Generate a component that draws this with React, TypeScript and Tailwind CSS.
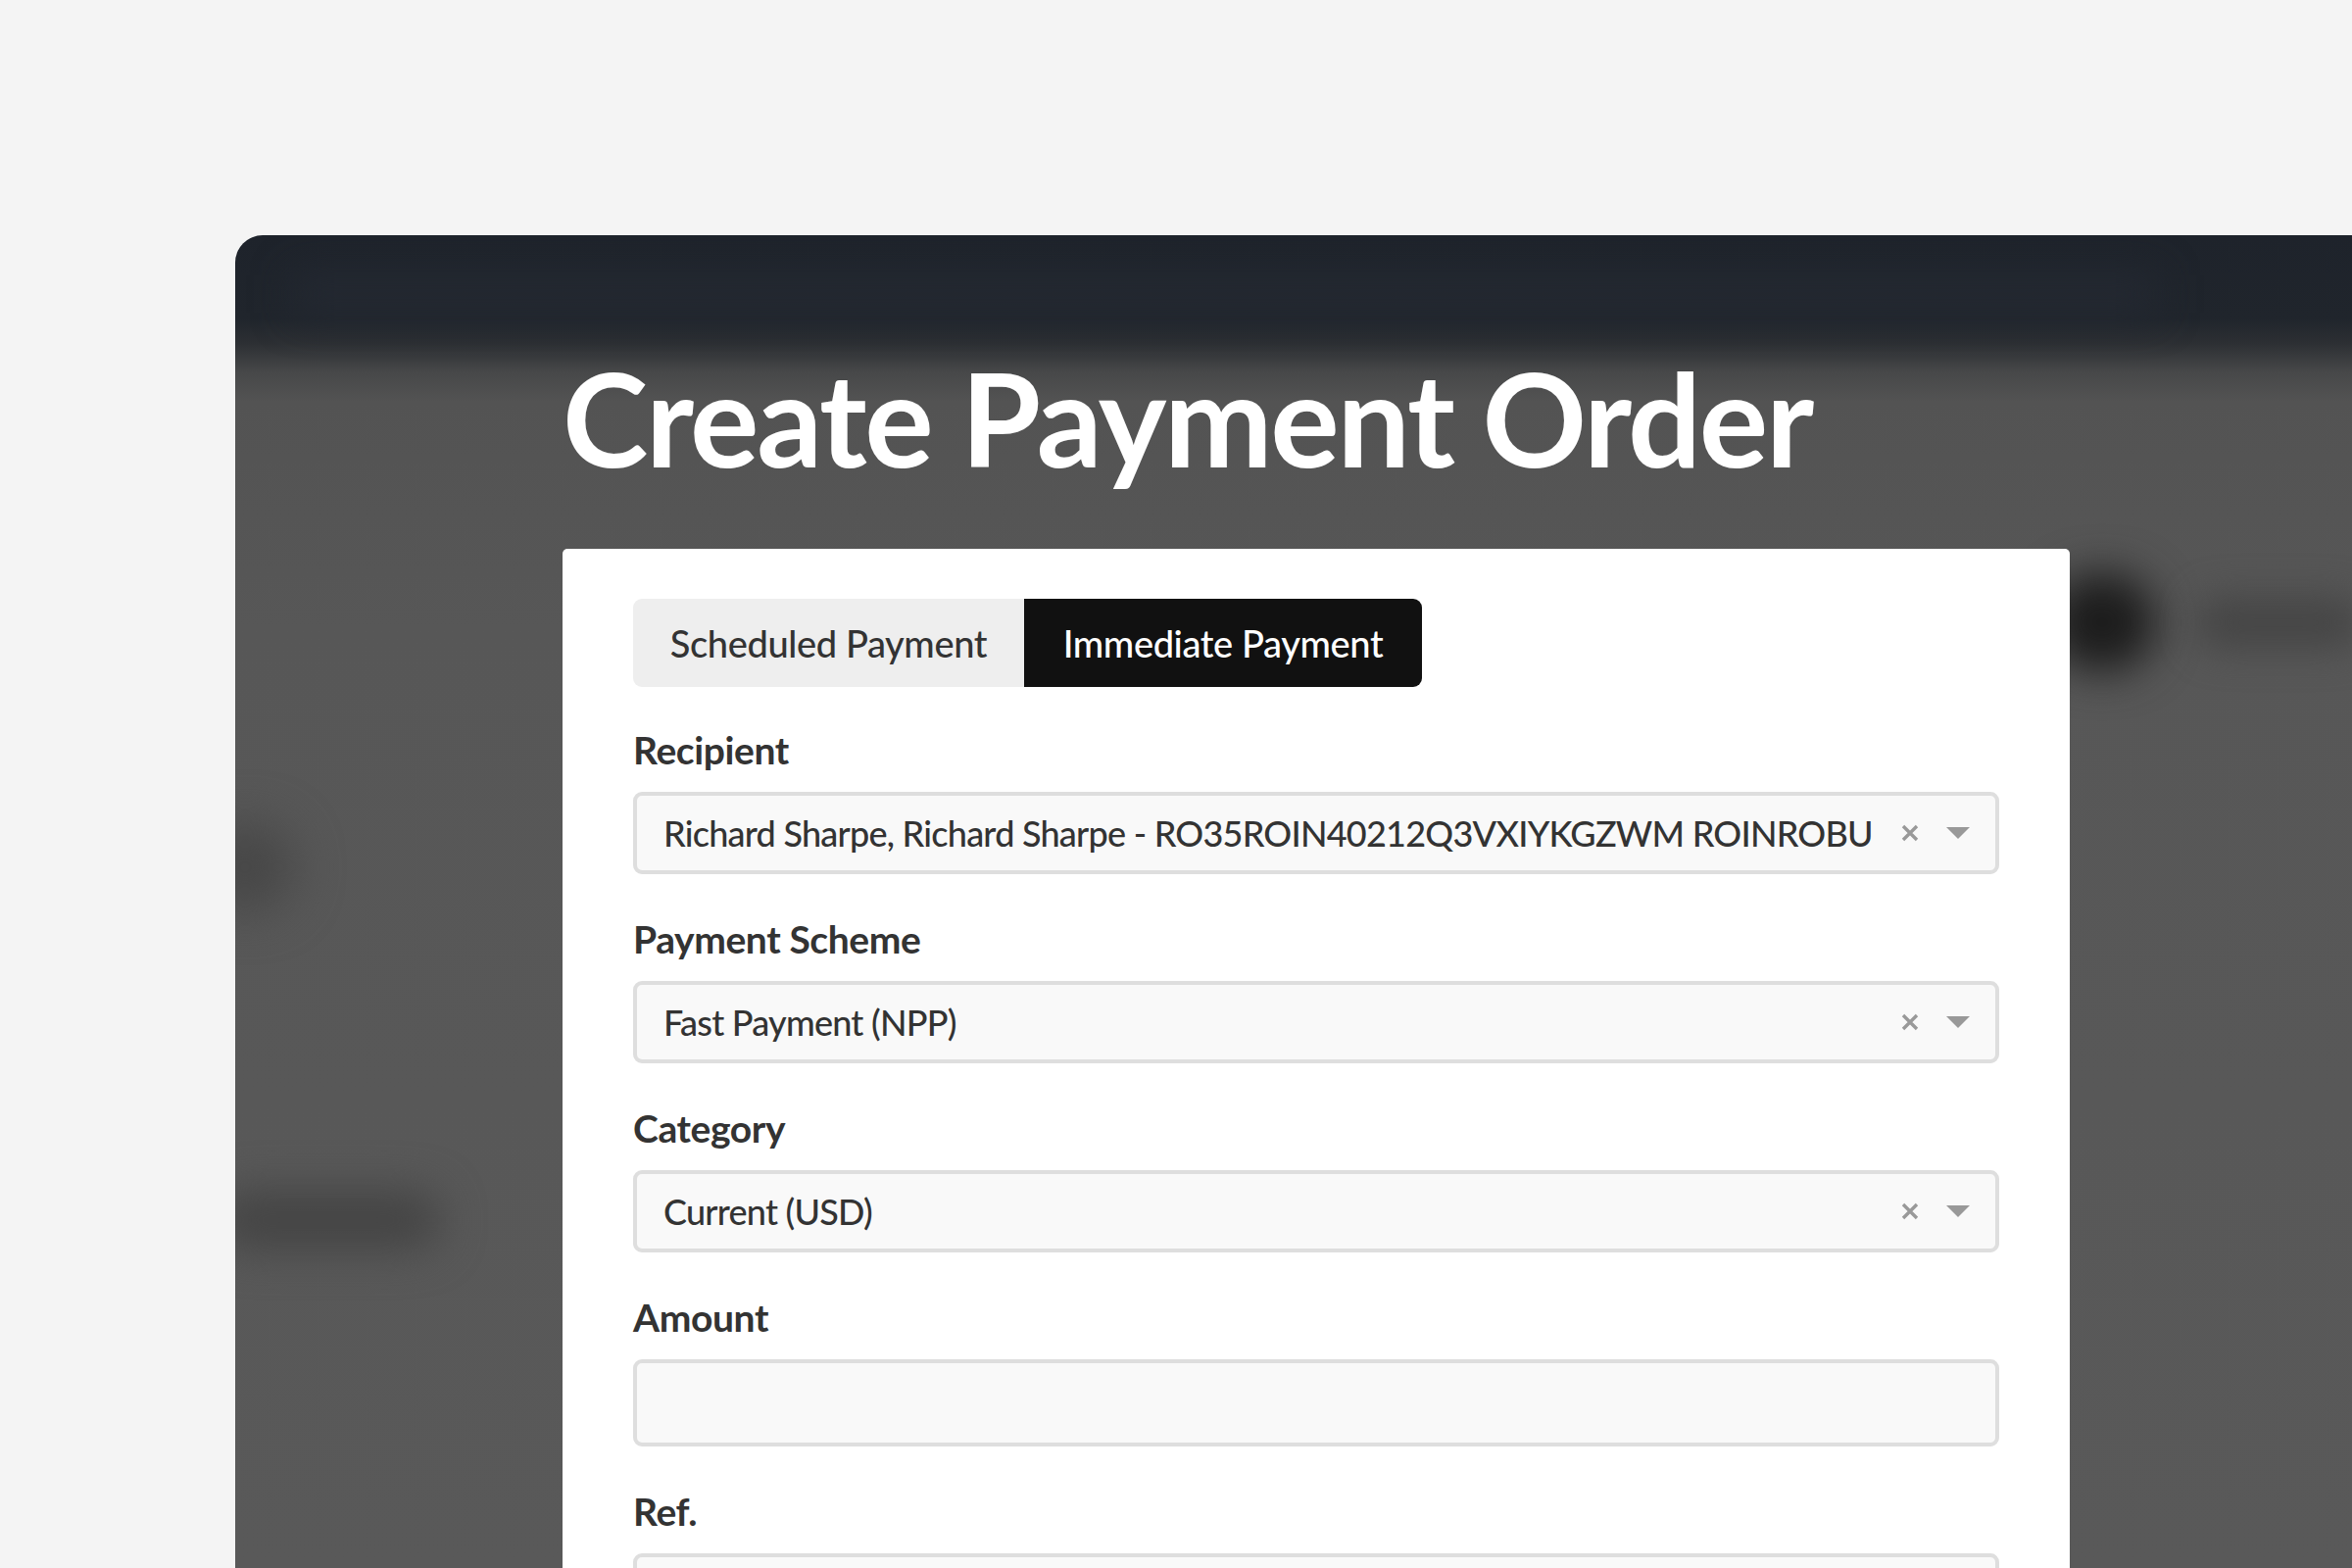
import { useState } from "react";

const font = { fontFamily: "Lato, 'Noto Sans', sans-serif" };

function Caret() {
  return (
    <svg width="24" height="12" viewBox="0 0 24 12" className="shrink-0">
      <path d="M0 0 L24 0 L12 12 Z" fill="#999999" />
    </svg>
  );
}

function Clear() {
  return (
    <svg width="18" height="18" viewBox="0 0 18 18" className="shrink-0">
      <path d="M2 2 L16 16 M16 2 L2 16" stroke="#999999" strokeWidth="3.4" strokeLinecap="butt" />
    </svg>
  );
}

interface FieldProps {
  label: string;
  value?: string;
  select?: boolean;
  tall?: boolean;
}

function Field(props: FieldProps) {
  return (
    <div className="flex flex-col">
      <label className="h-[48px] leading-[48px] text-[39px] font-bold text-[#333333] tracking-[-0.01em]">
        {props.label}
      </label>
      <div
        className={`mt-[19px] flex items-center rounded-[9px] border-[4px] border-[#dedede] bg-[#f9f9f9] pl-[27px] pr-[26px] ${
          props.tall ? "h-[89px]" : "h-[84px]"
        }`}
      >
        <span className="min-w-0 flex-1 whitespace-nowrap text-[36px] font-medium text-[#333333] tracking-[-0.021em]">
          {props.value}
        </span>
        {props.select && (
          <div className="flex items-center gap-[28px] pl-[10px]">
            <Clear />
            <Caret />
          </div>
        )}
      </div>
    </div>
  );
}

export default function App() {
  const [tab, setTab] = useState<"scheduled" | "immediate">("immediate");
  return (
    <div className="h-[1600px] w-[2400px] overflow-hidden bg-[#f4f4f4] pl-[240px] pt-[240px]" style={font}>
      <div className="relative h-[1360px] w-[2160px] overflow-hidden rounded-tl-[28px] bg-[linear-gradient(180deg,#1e232b_0px,#20252c_85px,#2c2f33_110px,#474849_140px,#535353_170px,#575757_400px,#595959_100%)]">
        {/* blurred page behind the overlay */}
        <div className="absolute left-[1850px] top-[345px] h-[100px] w-[110px] rounded-full bg-[#1c1c1c] blur-[22px]" />
        <div className="absolute left-[2000px] top-[368px] h-[55px] w-[170px] rounded-full bg-[#464646] blur-[18px]" />
        <div className="absolute left-[-40px] top-[600px] h-[90px] w-[100px] rounded-full bg-[#474747] blur-[24px]" />
        <div className="absolute left-[-20px] top-[975px] h-[60px] w-[230px] rounded-full bg-[#444444] blur-[22px]" />
        <div className="absolute left-[60px] top-[40px] h-[40px] w-[1900px] bg-[#242932] blur-[20px]" />

        <div className="relative flex flex-col pl-[334px]">
          <h1 className="mt-[86px] mb-[34px] h-[200px] text-[132px] leading-[200px] font-bold text-white tracking-[-0.017em]">
            Create Payment Order
          </h1>
          <div className="w-[1538px] h-[1100px] rounded-t-[5px] bg-white px-[72px] pt-[51px]">
            <div className="flex">
              <button
                onClick={() => setTab("scheduled")}
                className={`h-[90px] w-[399px] rounded-l-[9px] text-[38px] font-medium tracking-[-0.01em] ${
                  tab === "scheduled" ? "bg-[#111111] text-white" : "bg-[#eeeeee] text-[#333333]"
                }`}
              >
                Scheduled Payment
              </button>
              <button
                onClick={() => setTab("immediate")}
                className={`h-[90px] w-[406px] rounded-r-[9px] text-[38px] font-medium tracking-[-0.01em] ${
                  tab === "immediate" ? "bg-[#111111] text-white" : "bg-[#eeeeee] text-[#333333]"
                }`}
              >
                Immediate Payment
              </button>
            </div>
            <div className="mt-[40px] flex flex-col gap-[42px]">
              <Field
                label="Recipient"
                select
                value="Richard Sharpe, Richard Sharpe - RO35ROIN40212Q3VXIYKGZWM ROINROBU"
              />
              <Field label="Payment Scheme" select value="Fast Payment (NPP)" />
              <Field label="Category" select value="Current (USD)" />
              <Field label="Amount" tall />
              <Field label="Ref." tall />
            </div>
          </div>
        </div>
      </div>
    </div>
  );
}
